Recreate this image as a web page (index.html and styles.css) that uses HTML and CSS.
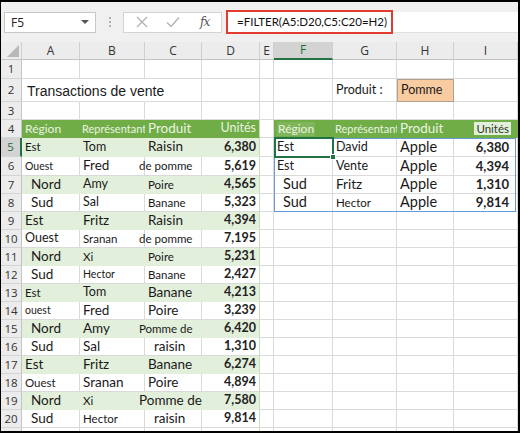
FILE: index.html
```html
<!DOCTYPE html>
<html lang="fr">
<head>
    <meta charset="UTF-8">
    <meta name="viewport" content="width=device-width, initial-scale=1.0">
    <title>FILTER - Transactions de vente</title>
    <link rel="stylesheet" href="styles.css">
</head>
<body>
    <div class="window">
        <!-- Formula bar -->
        <div class="formula-bar">
            <div class="name-box">
                <span>F5</span>
                <span class="caret"></span>
            </div>
            <div class="grip"><i></i><i></i><i></i></div>
            <div class="fn-buttons">
                <svg width="14" height="14" viewBox="0 0 14 14"><path d="M2 2 L12 12 M12 2 L2 12" stroke="#b3b3b3" stroke-width="1.4" fill="none"/></svg>
                <svg width="16" height="14" viewBox="0 0 16 14"><path d="M2 7.5 L6 11.5 L14 2.5" stroke="#b3b3b3" stroke-width="1.4" fill="none"/></svg>
                <span class="fx">fx</span>
            </div>
            <div class="formula-input">
                <div class="formula">=FILTER(A5:D20,C5:C20=H2)</div>
            </div>
        </div>

        <!-- Sheet -->
        <div class="sheet">
            <div class="r colhead">
                <div class="c corner"><span class="tri"></span></div>
                <div class="c">A</div><div class="c">B</div><div class="c">C</div><div class="c">D</div>
                <div class="c">E</div><div class="c active">F</div><div class="c">G</div><div class="c">H</div><div class="c">I</div>
            </div>

            <div class="r h19">
                <div class="c rh">1</div>
                <div class="c"></div><div class="c"></div><div class="c"></div><div class="c"></div>
                <div class="c"></div><div class="c"></div><div class="c"></div><div class="c"></div><div class="c"></div>
            </div>
            <div class="r h23">
                <div class="c rh">2</div>
                <div class="c open title">Transactions de vente</div><div class="c open"></div><div class="c"></div><div class="c"></div>
                <div class="c"></div><div class="c"></div><div class="c m">Produit :</div><div class="c pick m">Pomme</div><div class="c"></div>
            </div>
            <div class="r">
                <div class="c rh">3</div>
                <div class="c"></div><div class="c"></div><div class="c"></div><div class="c"></div>
                <div class="c"></div><div class="c"></div><div class="c"></div><div class="c"></div><div class="c"></div>
            </div>
            <div class="r">
                <div class="c rh">4</div>
                <div class="c hd">Région</div><div class="c hd narrow">Représentant</div><div class="c hd l">Produit</div><div class="c hd num edge">Unités</div>
                <div class="c"></div>
                <div class="c hd"><span class="ghost">Région</span></div><div class="c hd narrow">Représentant</div><div class="c hd l">Produit</div><div class="c hd num"><span class="tag">Unités</span></div>
            </div>
            <div class="r h19">
                <div class="c rh sel">5</div>
                <div class="c band s">Est</div><div class="c band m">Tom</div><div class="c band l">Raisin</div><div class="c band num edge">6,380</div>
                <div class="c"></div>
                <div class="c m">Est</div><div class="c m">David</div><div class="c xl">Apple</div><div class="c num out">6,380</div>
            </div>
            <div class="r h19">
                <div class="c rh">6</div>
                <div class="c xs">Ouest</div><div class="c l">Fred</div><div class="c s tuck">de pomme</div><div class="c num edge">5,619</div>
                <div class="c"></div>
                <div class="c m">Est</div><div class="c m">Vente</div><div class="c xl">Apple</div><div class="c num out">4,394</div>
            </div>
            <div class="r">
                <div class="c rh">7</div>
                <div class="c band l in">Nord</div><div class="c band m">Amy</div><div class="c band s">Poire</div><div class="c band num edge">4,565</div>
                <div class="c"></div>
                <div class="c xl in">Sud</div><div class="c l">Fritz</div><div class="c xl">Apple</div><div class="c num out">1,310</div>
            </div>
            <div class="r">
                <div class="c rh">8</div>
                <div class="c l in">Sud</div><div class="c m">Sal</div><div class="c s">Banane</div><div class="c num edge">5,323</div>
                <div class="c"></div>
                <div class="c xl in">Sud</div><div class="c s">Hector</div><div class="c xl">Apple</div><div class="c num out">9,814</div>
            </div>
            <div class="r">
                <div class="c rh">9</div>
                <div class="c band l">Est</div><div class="c band l">Fritz</div><div class="c band l">Raisin</div><div class="c band num edge">4,394</div>
                <div class="c"></div><div class="c"></div><div class="c"></div><div class="c"></div><div class="c"></div>
            </div>
            <div class="r">
                <div class="c rh">10</div>
                <div class="c m">Ouest</div><div class="c s">Sranan</div><div class="c s tuck">de pomme</div><div class="c num edge">7,195</div>
                <div class="c"></div><div class="c"></div><div class="c"></div><div class="c"></div><div class="c"></div>
            </div>
            <div class="r">
                <div class="c rh">11</div>
                <div class="c band l in">Nord</div><div class="c band s">Xi</div><div class="c band s">Poire</div><div class="c band num edge">5,231</div>
                <div class="c"></div><div class="c"></div><div class="c"></div><div class="c"></div><div class="c"></div>
            </div>
            <div class="r">
                <div class="c rh">12</div>
                <div class="c l in">Sud</div><div class="c xs">Hector</div><div class="c s">Banane</div><div class="c num edge">2,427</div>
                <div class="c"></div><div class="c"></div><div class="c"></div><div class="c"></div><div class="c"></div>
            </div>
            <div class="r">
                <div class="c rh">13</div>
                <div class="c band s">Est</div><div class="c band m">Tom</div><div class="c band l">Banane</div><div class="c band num edge">4,213</div>
                <div class="c"></div><div class="c"></div><div class="c"></div><div class="c"></div><div class="c"></div>
            </div>
            <div class="r">
                <div class="c rh">14</div>
                <div class="c xs">ouest</div><div class="c l">Fred</div><div class="c l">Poire</div><div class="c num edge">3,239</div>
                <div class="c"></div><div class="c"></div><div class="c"></div><div class="c"></div><div class="c"></div>
            </div>
            <div class="r">
                <div class="c rh">15</div>
                <div class="c band l in">Nord</div><div class="c band l">Amy</div><div class="c band s tuck">Pomme de</div><div class="c band num edge">6,420</div>
                <div class="c"></div><div class="c"></div><div class="c"></div><div class="c"></div><div class="c"></div>
            </div>
            <div class="r">
                <div class="c rh">16</div>
                <div class="c l in">Sud</div><div class="c l">Sal</div><div class="c l in">raisin</div><div class="c num edge">1,310</div>
                <div class="c"></div><div class="c"></div><div class="c"></div><div class="c"></div><div class="c"></div>
            </div>
            <div class="r">
                <div class="c rh">17</div>
                <div class="c band l">Est</div><div class="c band l">Fritz</div><div class="c band l">Banane</div><div class="c band num edge">6,274</div>
                <div class="c"></div><div class="c"></div><div class="c"></div><div class="c"></div><div class="c"></div>
            </div>
            <div class="r">
                <div class="c rh">18</div>
                <div class="c s">Ouest</div><div class="c l">Sranan</div><div class="c l">Poire</div><div class="c num edge">4,894</div>
                <div class="c"></div><div class="c"></div><div class="c"></div><div class="c"></div><div class="c"></div>
            </div>
            <div class="r">
                <div class="c rh">19</div>
                <div class="c band l in">Nord</div><div class="c band s">Xi</div><div class="c band l tuck">Pomme de</div><div class="c band num edge">7,580</div>
                <div class="c"></div><div class="c"></div><div class="c"></div><div class="c"></div><div class="c"></div>
            </div>
            <div class="r">
                <div class="c rh">20</div>
                <div class="c l in">Sud</div><div class="c s">Hector</div><div class="c l in">raisin</div><div class="c num edge">9,814</div>
                <div class="c"></div><div class="c"></div><div class="c"></div><div class="c"></div><div class="c"></div>
            </div>
            <div class="r">
                <div class="c rh"></div>
                <div class="c"></div><div class="c"></div><div class="c"></div><div class="c edge"></div>
                <div class="c"></div><div class="c"></div><div class="c"></div><div class="c"></div><div class="c"></div>
            </div>

            <!-- spill range + active cell -->
            <div class="spill"></div>
            <div class="cursor"><span class="handle"></span></div>
        </div>
    </div>
</body>
</html>
```

FILE: styles.css
```css
* {
    margin: 0;
    padding: 0;
    box-sizing: border-box;
}

body {
    width: 520px;
    height: 433px;
    overflow: hidden;
    background: #fff;
    font-family: Lato, "Liberation Sans", sans-serif;
    color: #1a1a1a;
}

.window {
    width: 520px;
    height: 433px;
    border: 2px solid #000;
    border-left-width: 1px;
    overflow: hidden;
    background: #fff;
}

/* ---------- formula bar ---------- */

.formula-bar {
    height: 40px;
    background: #f0f0f0;
    display: flex;
    align-items: center;
    padding-left: 3px;
}

.name-box {
    width: 92px;
    height: 21px;
    background: #fff;
    border: 1px solid #c8c8c8;
    display: flex;
    align-items: center;
    justify-content: space-between;
    padding: 0 6px 0 6px;
    font-family: "Open Sans", sans-serif;
    font-size: 12px;
    color: #222;
}

.caret {
    width: 0;
    height: 0;
    border-left: 4px solid transparent;
    border-right: 4px solid transparent;
    border-top: 4px solid #555;
}

.grip {
    width: 27px;
    display: flex;
    flex-direction: column;
    align-items: center;
    gap: 2px;
}

.grip i {
    width: 2px;
    height: 2px;
    background: #b0b0b0;
}

.fn-buttons {
    width: 99px;
    height: 21px;
    background: #fff;
    border: 1px solid #d4d4d4;
    display: flex;
    align-items: center;
    padding-left: 11px;
    gap: 16px;
}

.fx {
    font-family: "DejaVu Serif", serif;
    font-style: italic;
    font-size: 12px;
    color: #555;
    margin-left: 3px;
    letter-spacing: -1px;
}

.formula-input {
    flex: 1;
    height: 21px;
    margin-left: 4px;
    background: #fff;
    border-bottom: 1px solid #e0e0e0;
    display: flex;
    align-items: center;
}

.formula {
    width: 167px;
    height: 24px;
    border: 2px solid #e23b30;
    display: flex;
    align-items: center;
    padding-left: 9px;
    font-family: Lato, sans-serif;
    font-size: 11.5px;
    color: #111;
    white-space: nowrap;
}

/* ---------- sheet ---------- */

.sheet {
    position: relative;
    --cols: 21px 58px 65px 57px 58px 14px 59px 64px 57px 64px;
}

.r {
    display: grid;
    grid-template-columns: var(--cols);
    height: 18px;
}

.r.h19 { height: 19px; }
.r.h23 { height: 23px; }

.c {
    border-right: 1px solid #dadada;
    border-bottom: 1px solid #dadada;
    display: flex;
    align-items: center;
    padding-left: 3px;
    white-space: nowrap;
    font-size: 12px;
    line-height: 1;
}

.c.open { border-right-color: transparent; }

.title {
    font-family: "Liberation Sans", sans-serif;
    font-size: 14px;
    padding-left: 5px;
    padding-top: 2px;
}

.colhead {
    background: #ececec;
}

.colhead .c {
    justify-content: center;
    padding-left: 0;
    font-family: "Open Sans", sans-serif;
    font-size: 12px;
    color: #333;
    border-right-color: #d0d0d0;
    border-bottom-color: #c4c4c4;
}

.colhead .c.active {
    background: #d3d3d3;
    color: #1e6b3e;
    border-bottom: 2px solid #217346;
}

.corner {
    position: relative;
}

.tri {
    position: absolute;
    right: 2px;
    bottom: 2px;
    width: 0;
    height: 0;
    border-left: 12px solid transparent;
    border-bottom: 12px solid #b8b8b8;
}

.c.rh {
    background: #ececec;
    justify-content: center;
    padding-left: 0;
    font-family: "Open Sans", sans-serif;
    font-size: 11.5px;
    color: #333;
    border-right-color: #c4c4c4;
    border-bottom-color: #d4d4d4;
}

.c.rh.sel {
    background: #d3d3d3;
    color: #1e6b3e;
    border-right: 2px solid #217346;
}

/* text sizes, the scan mixes several */
.xs { font-size: 10.5px; }
.s  { font-size: 11.5px; }
.m  { font-size: 12.5px; }
.l  { font-size: 13.5px; }
.xl { font-size: 14.5px; }

.in   { padding-left: 9px; }
.tuck { padding-left: 0; margin-left: -6px; }

/* table */
.c.hd {
    background: #70ad47;
    color: #eaf3e2;
    border-color: #70ad47;
    font-size: 12px;
}

.c.hd.l { font-size: 13.5px; }
.c.hd.narrow { font-size: 11px; padding-left: 2px; }

.c.band {
    background: #e2efda;
    border-color: #e2efda;
}

.c.num {
    justify-content: flex-end;
    padding-right: 3px;
    font-weight: bold;
    font-size: 12.5px;
    color: #222;
}

.c.hd.num {
    font-weight: normal;
    color: #eaf3e2;
}

.c.edge { border-right-color: #c6e0b4; }

.c.out { padding-right: 8px; font-size: 13px; }

.ghost {
    background: #80b65a;
    padding: 1px 1px;
}

.tag {
    background: #e2efda;
    color: #2f3b28;
    font-size: 11.5px;
    padding: 1px 2px;
    margin-right: 3px;
}

.c.pick {
    background: #f8cba0;
    border: 1px solid #b3a08c;
}

.spill {
    position: absolute;
    left: 273px;
    top: 96px;
    width: 242px;
    height: 74px;
    border: 1.5px solid #6a9ad6;
    pointer-events: none;
}

.cursor {
    position: absolute;
    left: 273px;
    top: 95px;
    width: 60px;
    height: 21px;
    border: 2px solid #217346;
}

.handle {
    position: absolute;
    right: -4px;
    bottom: -4px;
    width: 6px;
    height: 6px;
    background: #217346;
    border: 1px solid #fff;
}
```
